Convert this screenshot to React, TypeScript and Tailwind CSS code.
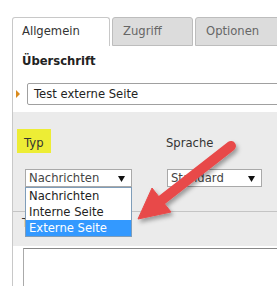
import React from "react";

function Arrow() {
  return (
    <svg
      className="absolute left-0 top-0 pointer-events-none z-30"
      width="277"
      height="286"
      viewBox="0 0 277 286"
    >
      <defs>
        <filter id="sh" x="-20%" y="-20%" width="140%" height="140%">
          <feDropShadow dx="2" dy="3" stdDeviation="2" floodColor="#000" floodOpacity="0.35" />
        </filter>
      </defs>
      <g filter="url(#sh)" fill="#e84a4a" stroke="#e84a4a">
        <line x1="231" y1="146" x2="158" y2="203" strokeWidth="10" strokeLinecap="round" />
        <polygon points="138,219 152,188 171,212" strokeWidth="1" strokeLinejoin="round" />
      </g>
    </svg>
  );
}

function SelectBox({ text, width }: { text: string; width: string }) {
  return (
    <div
      className={`${width} h-[18px] border border-[#a9a9a9] bg-white flex items-center justify-between pl-[3px] pr-[6px] leading-[16px] text-[#444] overflow-hidden`}
    >
      <span className="whitespace-nowrap">{text}</span>
      <svg width="7" height="7" viewBox="0 0 7 7" className="shrink-0">
        <polygon points="0,1 7,1 3.5,7" fill="#111" />
      </svg>
    </div>
  );
}

export default function App() {
  return (
    <div className="relative w-[277px] h-[286px] overflow-hidden bg-white font-['DejaVu_Sans',sans-serif] text-[11.6px]">
      {/* Tabs */}
      <div className="flex items-end pt-[17px] pl-[12px] gap-[2px] h-[46px]">
        <div className="w-[98px] h-[29px] shrink-0 border border-b-0 border-[#c8c8c8] rounded-t-[3px] bg-white pl-[9px] leading-[27px] text-[#333]">
          Allgemein
        </div>
        <div className="w-[81px] h-[29px] shrink-0 border border-[#bdbdbd] rounded-t-[3px] bg-[#dcdcdc] pl-[10px] leading-[27px] text-[#666]">
          Zugriff
        </div>
        <div className="w-[100px] h-[29px] shrink-0 border border-[#bdbdbd] rounded-t-[3px] bg-[#dcdcdc] pl-[10px] leading-[27px] text-[#666]">
          Optionen
        </div>
      </div>

      {/* Panel */}
      <div className="ml-[12px] border-l border-[#c8c8c8] h-[240px]">
        {/* white header section */}
        <div className="bg-white pt-[7px] pb-[7px]">
          <div className="pl-[9px] leading-[16px] font-bold text-[#222]">Überschrift</div>
          <div className="mt-[14px] flex items-center">
            <svg width="4" height="8" viewBox="0 0 4 8" className="ml-[3px] shrink-0">
              <polygon points="0,0 4,4 0,8" fill="#d98a1d" />
            </svg>
            <div className="ml-[7px] w-[300px] shrink-0 h-[22px] border border-[#a0a0a0] rounded-[2px] bg-white pl-[6px] leading-[20px] text-[#222]">
              Test externe Seite
            </div>
          </div>
        </div>

        {/* gray section */}
        <div className="bg-[#ebebeb] pt-[17px] h-[134px]">
          <div className="flex">
            <div className="w-[150px] shrink-0">
              <div className="ml-[4px] w-[34px] h-[24px] bg-[#eded35] pl-[7px] pt-[6px] leading-[16px] text-[#333]">
                Typ
              </div>
            </div>
            <div className="pl-[3px] pt-[6px] leading-[16px] text-[#333]">Sprache</div>
          </div>
          <div className="flex mt-[16px]">
            <div className="w-[150px] shrink-0">
              <div className="relative ml-[12px] w-[107px]">
                <SelectBox text="Nachrichten" width="w-[107px]" />
                <div className="absolute left-0 top-[18px] w-[107px] border border-[#7f9db9] bg-white z-20 leading-[16px]">
                  <div className="h-[16px] pl-[3px] text-[#222]">Nachrichten</div>
                  <div className="h-[16px] pl-[3px] text-[#222]">Interne Seite</div>
                  <div className="h-[16px] pl-[3px] bg-[#3399ff] text-white">Externe Seite</div>
                </div>
              </div>
            </div>
            <div className="ml-[4px]">
              <SelectBox text="Standard" width="w-[95px]" />
            </div>
          </div>
          <div className="mt-[24px] border-t border-[#c4c4c4] pt-[3px]">
            <div className="pl-[9px] leading-[16px] text-[#333]">T</div>
            <div className="mt-[17px] ml-[10px] w-[300px] h-[60px] border border-[#aaa] border-t-[#888] bg-white" />
          </div>
        </div>
      </div>

      <Arrow />
    </div>
  );
}
